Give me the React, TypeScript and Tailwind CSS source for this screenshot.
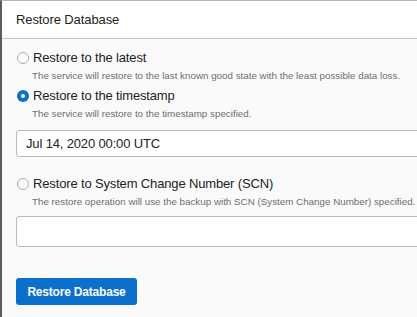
import React from "react";

function Radio({ checked }: { checked?: boolean }) {
  return checked ? (
    <span className="w-[12px] h-[12px] rounded-full bg-[#0b6fcc] flex items-center justify-center shrink-0">
      <span className="w-[4px] h-[4px] rounded-full bg-white" />
    </span>
  ) : (
    <span className="w-[12px] h-[12px] rounded-full border border-[#a9a9a9] bg-white shrink-0" />
  );
}

function Option({ label, desc, checked }: { label: string; desc: string; checked?: boolean }) {
  return (
    <div className="flex flex-col">
      <div className="flex items-center h-[16px] pl-[1px]">
        <Radio checked={checked} />
        <span className="ml-[4px] text-[13px] leading-[16px] tracking-[-0.15px] text-[#222] whitespace-nowrap">{label}</span>
      </div>
      <div className="mt-[4px] pl-[16px] text-[9.8px] leading-[12px] text-[#6e6e6e] whitespace-nowrap">{desc}</div>
    </div>
  );
}

export default function App() {
  return (
    <div
      className="w-[417px] h-[317px] bg-[#fafafa] border-l-[2px] border-l-[#5c5c5c] border-t border-t-[#b5b5b5] overflow-hidden flex flex-col"
      style={{ fontFamily: '"Liberation Sans", Arial, sans-serif' }}
    >
      <div className="h-[38px] bg-white border-b border-[#c4c4c4] flex items-center pl-[14px] text-[13px] tracking-[-0.1px] text-[#222] shrink-0">
        Restore Database
      </div>
      <div className="flex flex-col pl-[14px] pt-[11px]">
        <Option label="Restore to the latest" desc="The service will restore to the last known good state with the least possible data loss." />
        <div className="mt-[6px]">
          <Option checked label="Restore to the timestamp" desc="The service will restore to the timestamp specified." />
        </div>
        <div className="mt-[10px] w-[420px] h-[27px] bg-white border border-[#b9b9b9] rounded-[3px] flex items-center pl-[9px] text-[13px] tracking-[-0.15px] text-[#222] shrink-0">
          Jul 14, 2020 00:00 UTC
        </div>
        <div className="mt-[19px]">
          <Option label="Restore to System Change Number (SCN)" desc="The restore operation will use the backup with SCN (System Change Number) specified." />
        </div>
        <div className="mt-[8px] w-[420px] h-[31px] bg-white border border-[#b9b9b9] rounded-[3px] shrink-0" />
        <div className="mt-[31px]">
          <button className="w-[121px] h-[27px] bg-[#0b6fcc] rounded-[3px] text-white text-[12px] font-bold tracking-[-0.2px]">
            Restore Database
          </button>
        </div>
      </div>
    </div>
  );
}
